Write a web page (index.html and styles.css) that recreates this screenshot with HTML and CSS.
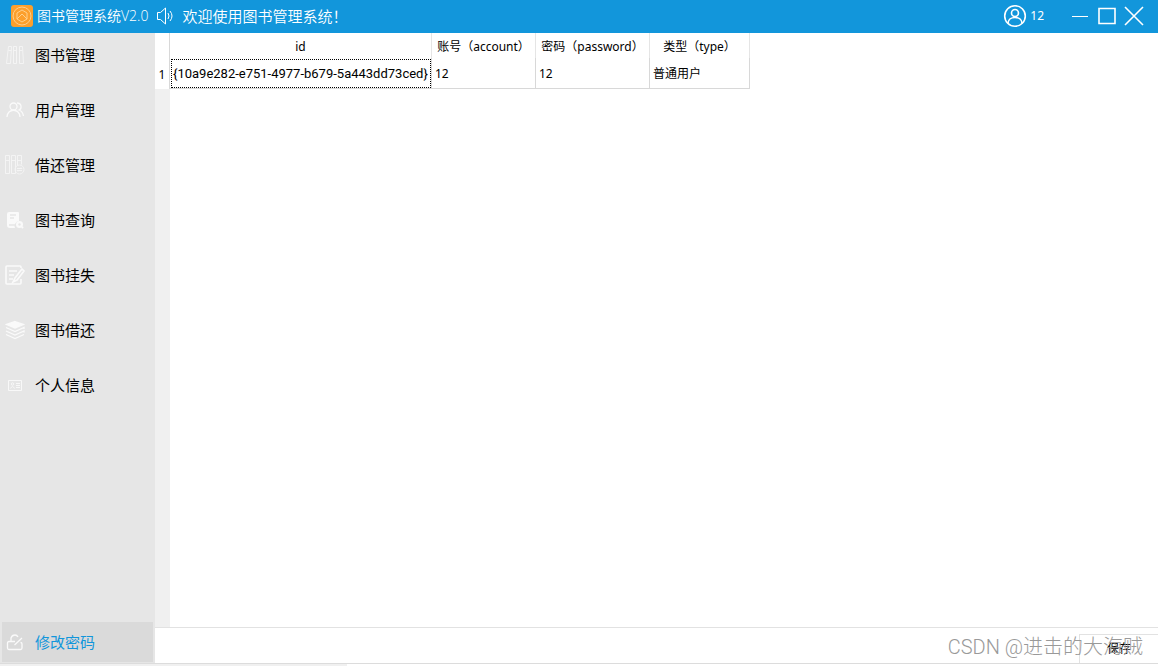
FILE: index.html
```html
<!DOCTYPE html>
<html lang="zh-CN">
<head>
<meta charset="utf-8">
<title>图书管理系统V2.0</title>
<link rel="stylesheet" href="styles.css">
</head>
<body>
<header class="titlebar">
  <svg class="logo" viewBox="0 0 22 22"><rect width="22" height="22" rx="3" fill="#fc9f2c"/><g fill="none" stroke="#ffd08c"><circle cx="11" cy="11" r="9"/><path d="M11 5l5 3v6l-5 3-5-3V8z M6 14l5-5 5 5"/></g></svg>
  <h1 class="title">图书管理系统V2.0</h1>
  <svg class="speaker" viewBox="0 0 18 18"><path d="M1.500 5.500h3l5-4.500v16l-5-4.500h-3z M12 6q2 3 0 6 M14 4q4 5 0 10"/></svg>
  <p class="welcome">欢迎使用图书管理系统！</p>
  <div class="account">
    <svg class="avatar" viewBox="0 0 24 24"><circle cx="12" cy="12" r="10.300"/><circle cx="12" cy="9" r="3.500"/><path d="M5 19.500c0-8 14-8 14 0"/></svg>
    <span>12</span>
  </div>
  <div class="controls">
    <button class="control" aria-label="最小化"><svg viewBox="0 0 20 20"><path d="M2 10.500h16" stroke-width="1"/></svg></button>
    <button class="control" aria-label="最大化"><svg viewBox="0 0 20 20"><path d="M2 2.500h16v15H2z"/></svg></button>
    <button class="control" aria-label="关闭"><svg viewBox="0 0 20 20"><path d="M1 1l18 18M19 1L1 19"/></svg></button>
  </div>
</header>
<div class="workspace">
  <nav class="sidebar">
    <button class="item"><svg class="icon faint" viewBox="0 0 20 20"><path d="M3.500 1.500h3L5.500 18.500h-4z M8.500 1.500h3v17h-3z M14.500 1.500h3l1 17h-4z M3.500 5.500h3M8.500 5.500h3M14.500 5.500h3"/></svg>图书管理</button>
    <button class="item"><svg class="icon" viewBox="0 0 20 20"><circle cx="8.500" cy="6.500" r="3.500"/><path d="M2 17c0-9 13-9 13 0 M12 3c5 0 5 6 2 7 3 1 4 3 4.500 6"/></svg>用户管理</button>
    <button class="item"><svg class="icon faint" viewBox="0 0 20 20"><path d="M.500.500h4v18h-4z M6.500.500h4v18h-4z M12.500 10.500V.500h4v9 M1 5.500h3M7 5.500h3M13 5.500h3"/><circle cx="14.500" cy="14.500" r="4.500"/><path d="M12 13.500h5l-1-1M17 15.500h-5l1 1"/></svg>借还管理</button>
    <button class="item"><svg class="icon solid" viewBox="0 0 20 20"><path d="M4 2h9q1 0 1 1v8a5 5 0 0 0-4 7H5q-3 0-3-3V4q0-2 2-2z"/><circle cx="14.500" cy="14.500" r="3.500"/><path class="cut" d="M5 5h6M5 8h4M4 15h6"/><circle cx="14.500" cy="14.500" r="1.200" fill="#e6e6e6"/><path class="tail" d="M17 17l1 1"/></svg>图书查询</button>
    <button class="item"><svg class="icon bold" viewBox="0 0 20 20"><path d="M16 3V2q0-1-1-1H2Q1 1 1 2v16q0 1 1 1h13q1 0 1-1v-4 M4 6h8M4 10h5M4 14h4 M17 4l2 2-7 9-4 2 2-4z"/></svg>图书挂失</button>
    <button class="item"><svg class="icon" viewBox="0 0 20 20"><path fill="#fafafa" d="M10 1.500l8.500 3L10 8 1.500 4.500z"/><path d="M1 7.500l9 4 9-4v1.500M1 11l9 4 9-4v1.500M1 14.500l9 4 9-4"/></svg>图书借还</button>
    <button class="item"><svg class="icon thin" viewBox="0 0 20 20"><path d="M3.500 5.500h13v10h-13z M11 8.500h4M11 10.500h4M11 12.500h4 M5.500 13.500q2-4 4 0"/><circle cx="7.500" cy="9" r="1.200"/></svg>个人信息</button>
    <button class="item active"><svg class="icon" viewBox="0 0 20 20"><path d="M10 9.500H4q-1.500 0-1.500 1.500v5q0 1.500 1.500 1.500h11.500q1.500 0 1.500-1.500v-4q0-1.500-1.500-1.500 M6 9V6q1-3 4-3 2 0 3 2 M9.500 13l7.500-7"/></svg>修改密码</button>
  </nav>
  <main class="main">
    <div class="grid">
      <table class="users">
        <colgroup><col class="c-num"><col class="c-id"><col class="c-account"><col class="c-password"><col class="c-type"></colgroup>
        <thead><tr><td></td><th scope="col">id</th><th scope="col">账号（account）</th><th scope="col">密码（password）</th><th scope="col">类型（type）</th></tr></thead>
        <tbody><tr><th scope="row">1</th><td class="focused">{10a9e282-e751-4977-b679-5a443dd73ced}</td><td>12</td><td>12</td><td>普通用户</td></tr></tbody>
      </table>
    </div>
    <footer class="actions">
      <button class="save">保存</button>
      <span class="watermark">CSDN @进击的大海贼</span>
    </footer>
  </main>
</div>
<div class="edge"></div>
</body>
</html>
```
FILE: styles.css
```css
* { box-sizing: border-box; }
body {
  margin: 0;
  height: 100vh;
  display: flex;
  flex-direction: column;
  overflow: hidden;
  background: #fff;
  color: #000;
  font: 12px/16px "Noto Sans", "Noto Sans CJK SC", sans-serif;
}
button { font: inherit; border: 0; padding: 0; background: none; }
.titlebar {
  flex: none;
  height: 33px;
  padding: 0 14px 2px 11px;
  display: flex;
  align-items: center;
  background: #1296db;
  color: #fff;
}
.logo { width: 22px; height: 22px; margin-right: 4px; }
.title { margin: 0; font-size: 14px; font-weight: 400; line-height: 20px; }
.speaker { width: 18px; height: 18px; margin: 0 8px; }
.welcome { margin: 0; font-size: 15px; font-weight: 400; line-height: 20px; }
.title, .welcome { font-family: "Open Sans", "Noto Sans CJK SC", sans-serif; font-weight: 350; }
.speaker, .avatar, .control svg { fill: none; stroke: #fff; }
.account { margin-left: auto; display: flex; align-items: center; gap: 3px; }
.avatar { width: 24px; height: 24px; stroke-width: 1.6px; }
.controls { display: flex; gap: 7px; margin-left: 26px; }
.control { width: 20px; height: 20px; }
.control svg { display: block; width: 20px; height: 20px; stroke-width: 1.6px; }
.workspace { flex: 1; min-height: 0; display: flex; }
.sidebar {
  flex: none;
  width: 155px;
  padding: 2px 2px 1px;
  display: flex;
  flex-direction: column;
  gap: 15px;
  background: #e6e6e6;
}
.item {
  height: 40px;
  padding-left: 3px;
  display: flex;
  align-items: center;
  gap: 10px;
  font-size: 15px;
  text-align: left;
}
.item.active { margin-top: auto; background: #dadada; color: #1296db; }
.icon { width: 20px; height: 20px; fill: none; stroke: #fafafa; stroke-width: 1.3px; }
.faint { stroke: #f4f4f4; stroke-width: 1px; }
.thin { stroke: #f8f8f8; stroke-width: 1px; }
.bold { stroke-width: 1.6px; }
.solid { fill: #fafafa; stroke: none; }
.cut { fill: none; stroke: #e6e6e6; }
.tail { stroke: #fafafa; stroke-width: 2px; }
.main { flex: 1; min-width: 0; display: flex; flex-direction: column; }
.grid { flex: 1; background: linear-gradient(to right, #f0f0f0 15px, #fff 15px); }
.users { table-layout: fixed; width: 595px; border-collapse: separate; border-spacing: 0; background: #fff; }
.c-num { width: 15px; }
.c-id { width: 262px; }
.c-account { width: 104px; }
.c-password { width: 114px; }
.c-type { width: 100px; }
.users th, .users td {
  padding: 0 0 0 3px;
  border-right: 1px solid #d8d8d8;
  font-weight: 400;
  text-align: left;
  white-space: nowrap;
}
.users thead th { height: 25px; padding: 2px 0 0; text-align: center; border-color: #e5e5e5; }
.users tbody td { height: 31px; padding-top: 1px; border-bottom: 1px solid #d8d8d8; }
.users tbody th { padding: 2px 0 0; text-align: center; }
.users .focused { padding-left: 3px; font-family: Roboto, sans-serif; font-size: 13px; outline: 1px dotted #000; outline-offset: -2px; }
.actions {
  position: relative;
  flex: none;
  height: 36px;
  display: flex;
  align-items: flex-end;
  justify-content: flex-end;
  border-top: 1px solid #e2e2e2;
}
.save { width: 79px; height: 29px; border: 1px solid #e2e2e2; border-width: 1px 0 0 1px; }
.watermark {
  position: absolute;
  right: 15px;
  bottom: 3px;
  color: #999;
  font-family: Roboto, "Noto Sans CJK SC", sans-serif;
  font-size: 20px;
  font-weight: 300;
  line-height: 26px;
  white-space: nowrap;
}
.edge { flex: none; height: 3px; border-top: 1px solid #dcdcdc; background: linear-gradient(to right, #f0f0f0 30%, #fff 30%); }
```
